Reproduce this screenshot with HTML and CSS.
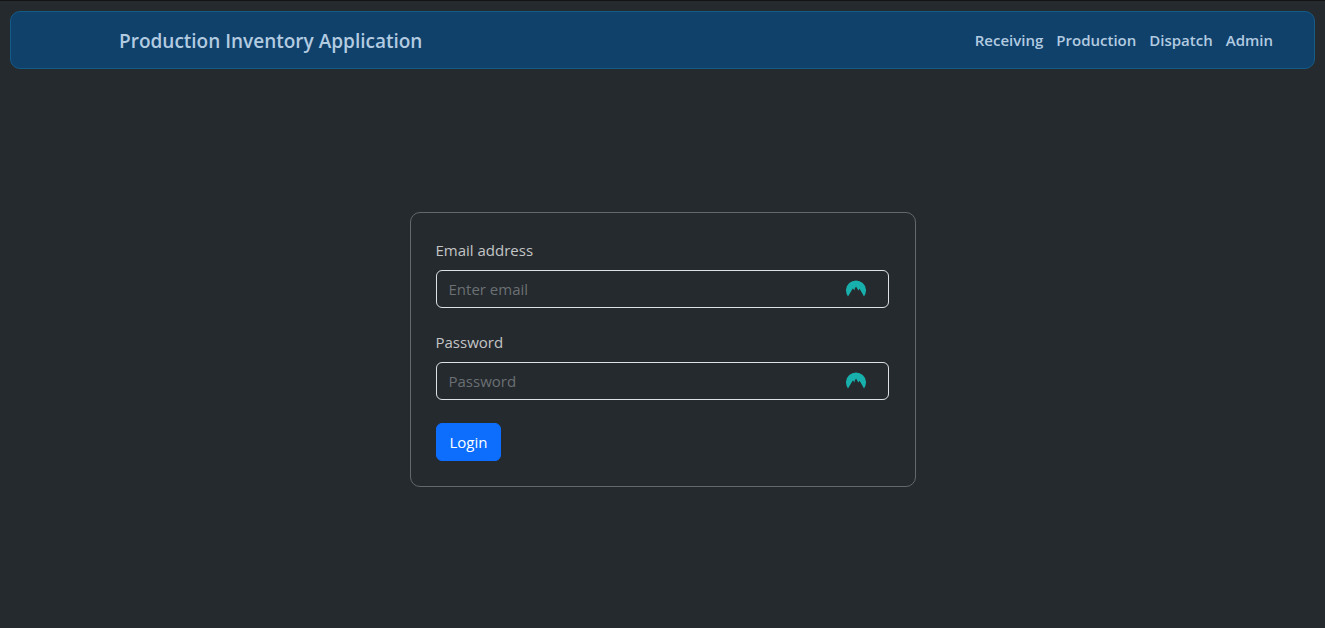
FILE: index.html
```html
<!DOCTYPE html>
<html lang="en">
<head>
<meta charset="utf-8">
<meta name="viewport" content="width=device-width, initial-scale=1">
<title>Production Inventory Application</title>
<link rel="stylesheet" href="styles.css">
</head>
<body>
<header class="navbar">
  <a class="brand" href="#">Production Inventory Application</a>
  <nav class="nav-links">
    <a href="#">Receiving</a>
    <a href="#">Production</a>
    <a href="#">Dispatch</a>
    <a href="#">Admin</a>
  </nav>
</header>
<main class="page">
  <form class="login-card">
    <div class="field">
      <label for="email">Email address</label>
      <div class="control">
        <input id="email" type="email" placeholder="Enter email">
        <svg class="field-icon" viewBox="0 0 20 17" aria-hidden="true"><path d="M2 16.4A10 10 0 1 1 18 16.4L13.6 8.8L12.4 10.4L10 6.4L8.6 9L9 10.4L6.8 8.6Z"/></svg>
      </div>
    </div>
    <div class="field">
      <label for="password">Password</label>
      <div class="control">
        <input id="password" type="password" placeholder="Password">
        <svg class="field-icon" viewBox="0 0 20 17" aria-hidden="true"><path d="M2 16.4A10 10 0 1 1 18 16.4L13.6 8.8L12.4 10.4L10 6.4L8.6 9L9 10.4L6.8 8.6Z"/></svg>
      </div>
    </div>
    <button class="login-button" type="submit">Login</button>
  </form>
</main>
</body>
</html>
```
FILE: styles.css
```css
* {
  box-sizing: border-box;
}

body {
  display: flex;
  flex-direction: column;
  min-height: 100vh;
  margin: 0;
  border-top: 1px solid #111314;
  background: #252a2e;
  color: #c3c5c6;
  font: 15px/23px "Segoe UI", "Open Sans", "Noto Sans", sans-serif;
}

.navbar {
  display: flex;
  flex-wrap: wrap;
  align-items: center;
  justify-content: space-between;
  gap: 8px 24px;
  min-height: 58px;
  margin: 10px 10px 0;
  padding: 8px 41px 8px 108px;
  border: 1px solid #155b87;
  border-radius: 10px;
  background: #0f416b;
}

.brand,
.nav-links a {
  color: #b3cbe0;
  font-weight: 600;
  text-decoration: none;
}

.brand {
  padding-top: 2px;
  font-size: 19px;
  line-height: 30px;
}

.nav-links {
  display: flex;
  flex-wrap: wrap;
  gap: 13px;
}

.page {
  display: flex;
  flex: 1;
  align-items: center;
  justify-content: center;
  padding: 2px 10px 0;
}

.login-card {
  display: flex;
  flex-direction: column;
  align-items: flex-start;
  gap: 23px;
  width: 100%;
  max-width: 506px;
  padding: 26px 26px 25px 25px;
  border: 1px solid #63686b;
  border-radius: 10px;
}

.field {
  display: flex;
  flex-direction: column;
  gap: 8px;
  width: 100%;
}

.control {
  position: relative;
}

.control input {
  display: block;
  width: 100%;
  height: 38px;
  padding: 6px 48px 6px 12px;
  border: 1px solid #dee2e6;
  border-radius: 6px;
  background: transparent;
  color: #dee2e6;
  font: inherit;
}

.control input::placeholder {
  color: #6b7074;
  opacity: 1;
}

.field-icon {
  position: absolute;
  top: 10px;
  right: 23px;
  width: 20px;
  height: 17px;
  fill: #17b0ad;
}

.login-button {
  height: 38px;
  padding: 6px 13px;
  border: 1px solid #0d6efd;
  border-radius: 6px;
  background: #0d6efd;
  color: #fff;
  font: inherit;
}
```
